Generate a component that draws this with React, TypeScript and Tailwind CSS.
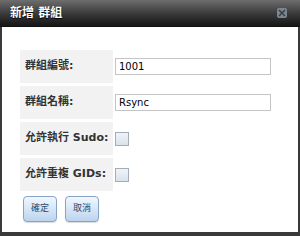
export default function App() {
  const rows = [
    { label: "群組編號:", kind: "text", value: "1001" },
    { label: "群組名稱:", kind: "text", value: "Rsync" },
    { label: "允許執行 Sudo:", kind: "check", value: "" },
    { label: "允許重複 GIDs:", kind: "check", value: "" },
  ];

  return (
    <div className="w-[300px] h-[236px] bg-[#3a3a3a] p-[2px] pt-0 pb-[4px] flex flex-col font-['DejaVu_Sans','Noto_Sans_CJK_TC',sans-serif]">
      {/* Title Bar */}
      <div className="h-[27px] -mx-[2px] shrink-0 bg-gradient-to-b from-[#6e6e6e] via-[#3c3c3c] to-[#161616] border-b border-[#111] flex items-center justify-between pl-[10px] pr-[13px]">
        <div className="text-white text-[12px] font-bold [text-shadow:0_1px_1px_#000] leading-none">
          新增 群組
        </div>
        <div className="w-[10px] h-[10px] rounded-[2px] bg-[#7d8690] flex items-center justify-center">
          <svg width="8" height="8" viewBox="0 0 8 8">
            <path d="M1 1L7 7M7 1L1 7" stroke="#3b4148" strokeWidth="1.6" />
          </svg>
        </div>
      </div>

      {/* Body */}
      <div className="flex-1 bg-white pl-[18px] pt-[23px]">
        <div className="grid grid-cols-[93px_158px] gap-x-[2px] gap-y-[3px]">
          {rows.map((row) => (
            <div key={row.label} className="contents">
              <div className="h-[33px] bg-[#f2f2f2] pl-[5px] flex items-center text-[11px] font-bold text-[#333] whitespace-nowrap">
                {row.label}
              </div>
              <div className="h-[33px] flex items-center">
                {row.kind === "text" ? (
                  <div className="w-[156px] h-[17px] border border-[#c4c4c4] bg-white flex items-center pl-[3px] text-[10px] text-black">
                    {row.value}
                  </div>
                ) : (
                  <div className="w-[14px] h-[14px] border border-[#a3adb8] bg-gradient-to-b from-[#f0f4f8] to-[#d9e2eb]" />
                )}
              </div>
            </div>
          ))}
        </div>

        {/* Buttons */}
        <div className="flex gap-[8px] mt-[5px] pl-[3px]">
          <button className="w-[34px] h-[26px] rounded-[4px] border border-[#86a4c8] bg-gradient-to-b from-[#f2f7fd] to-[#bcd4ef] text-[9px] text-[#2c4a6e] shadow-[0_1px_1px_rgba(0,0,0,0.15)]">
            確定
          </button>
          <button className="w-[34px] h-[26px] rounded-[4px] border border-[#86a4c8] bg-gradient-to-b from-[#f2f7fd] to-[#bcd4ef] text-[9px] text-[#2c4a6e] shadow-[0_1px_1px_rgba(0,0,0,0.15)]">
            取消
          </button>
        </div>
      </div>
    </div>
  );
}
